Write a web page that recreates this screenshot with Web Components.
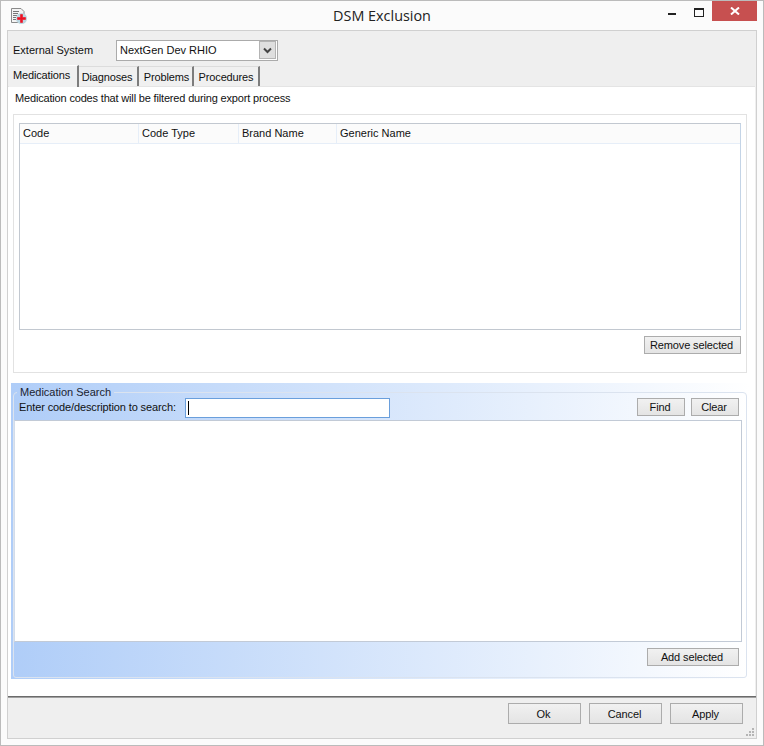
<!DOCTYPE html>
<html>
<head>
<meta charset="utf-8">
<title>DSM Exclusion</title>
<style>
    html,body{margin:0;padding:0;background:#fbfbfb;}
    body{font:11px "Liberation Sans",Arial,sans-serif;color:#111;}
</style>
</head>
<body>
<dialog-window>
    <system-bar slot="top"></system-bar>
    <tab-strip active="Medications" tabs="Diagnoses,Problems,Procedures" slot="tabs"></tab-strip>

    <export-filter></export-filter>
    <med-search></med-search>

    <ui-button slot="actions" w="73" h="21">Ok</ui-button>
    <ui-button slot="actions" w="73" h="21">Cancel</ui-button>
    <ui-button slot="actions" w="73" h="21">Apply</ui-button>
</dialog-window>

<script>
class UiButton extends HTMLElement {
    constructor(){
        super();
        this.attachShadow({mode:'open'});
    }
    connectedCallback(){
        const w = this.getAttribute('w') || 48;
        const h = this.getAttribute('h') || 18;
        this.shadowRoot.innerHTML = `
        <style>
        :host{
            display:flex;
            align-items:center;
            justify-content:center;
            box-sizing:border-box;
            width:${w}px;
            height:${h}px;
            flex:none;
            padding-right:2px;
            border:1px solid #acacac;
            background:linear-gradient(#f1f1f1,#e4e4e4);
            color:#111;
            letter-spacing:-.12px;
        }
        </style>
        <slot></slot>
        `;
    }
}

class TabStrip extends HTMLElement {
    constructor(){
        super();
        this.attachShadow({mode:'open'});
    }
    connectedCallback(){
        const others = this.getAttribute('tabs').split(',');
        const widths = {Diagnoses:60,Problems:55,Procedures:66};
        const nudge = {Diagnoses:'0 2px 0 0',Problems:'0 0 0 2px',Procedures:'0'};
        this.shadowRoot.innerHTML = `
        <style>
        :host{
            display:flex;
            align-items:flex-end;
            height:21px;
            padding-left:1px;
            position:relative;
            z-index:1;
            letter-spacing:-.15px;
        }
        .tab{
            box-sizing:border-box;
            height:20px;
            display:flex;
            align-items:center;
            justify-content:center;
            border-right:2px solid #7d7d7d;
            border-top:1px solid #dcdcdc;
            background:#f0f0f0;
            padding-top:1px;
        }
        .on{
            width:70px;
            height:22px;
            margin-bottom:-1px;
            padding:0 3px 4px 0;
            border-top:1px solid #fff;
            background:#f0f0f0;
        }
        </style>
        <div class="tab on">${this.getAttribute('active')}</div>
        ${others.map(t => `<div class="tab" style="width:${widths[t]}px;padding:1px ${nudge[t].split(' ')[1] || 0} 0 ${nudge[t].split(' ')[3] || 0}">${t}</div>`).join('')}
        `;
    }
}

class ListView extends HTMLElement {
    constructor(){
        super();
        this.attachShadow({mode:'open'});
    }
    connectedCallback(){
        this.shadowRoot.innerHTML = `
        <style>
        :host{
            display:block;
            box-sizing:border-box;
            height:207px;
            border:1px solid #c2c8d0;
            border-right-color:#c4d4e6;
            background:#fff;
        }
        .head{
            display:grid;
            grid-template-columns:119px 100px 98px 1fr;
            height:20px;
            background:#fbfbfb;
            border-bottom:1px solid #e6eef8;
            box-sizing:border-box;
        }
        .head div{
            padding-left:3px;
            line-height:19px;
            border-right:1px solid #e6eef8;
        }
        .head div:last-child{border-right:0;}
        </style>
        <div class="head">
            <div>Code</div>
            <div>Code Type</div>
            <div>Brand Name</div>
            <div>Generic Name</div>
        </div>
        `;
    }
}

class ExportFilter extends HTMLElement {
    constructor(){
        super();
        this.attachShadow({mode:'open'});
    }
    connectedCallback(){
        this.shadowRoot.innerHTML = `
        <style>
        :host{display:block;}
        p{
            margin:0;
            padding:4px 0 0 7px;
            height:23px;
            line-height:14px;
            letter-spacing:-.17px;
        }
        .box{
            box-sizing:border-box;
            margin:0 8px 0 5px;
            height:259px;
            border:1px solid #e2e2e2;
            padding:8px 5px 0 5px;
        }
        .foot{
            display:flex;
            justify-content:flex-end;
            margin-top:6px;
        }
        </style>
        <p>Medication codes that will be filtered during export process</p>
        <div class="box">
            <list-view></list-view>
            <div class="foot"><ui-button w="97" h="18">Remove selected</ui-button></div>
        </div>
        `;
    }
}

class MedSearch extends HTMLElement {
    constructor(){
        super();
        this.attachShadow({mode:'open'});
    }
    connectedCallback(){
        this.shadowRoot.innerHTML = `
        <style>
        :host{
            display:block;
            box-sizing:border-box;
            height:296px;
            margin:10px 5px 0 3px;
            padding:2px 3px 1px 2px;
            background:linear-gradient(90deg,#afcdf8 0%,#fff 100%);
        }
        fieldset{
            box-sizing:border-box;
            height:100%;
            margin:0;
            padding:0 6px 0 0;
            border:1px solid #dbe3ef;
            border-radius:4px 4px 3px 3px;
            min-width:0;
        }
        legend{
            margin-left:3px;
            padding:0 3px;
            line-height:14px;
            color:#1b2330;
        }
        .row{
            display:flex;
            align-items:flex-start;
            height:22px;
            margin-top:-1px;
            padding-left:5px;
        }
        label{line-height:19px;width:166px;flex:none;white-space:nowrap;letter-spacing:-.12px;}
        .input{
            box-sizing:border-box;
            width:205px;
            height:20px;
            border:1px solid #6a9fdc;
            background:#fff;
            display:flex;
            align-items:center;
            padding-left:2px;
        }
        .caret{width:1px;height:14px;background:#000;}
        .right{
            display:flex;
            gap:6px;
            margin-left:auto;
            margin-right:1px;
        }
        .results{
            box-sizing:border-box;
            height:222px;
            margin-right:-2px;
            border:1px solid #c2cad6;
            border-left-color:#d2dcea;
            background:#fff;
        }
        .foot{
            display:flex;
            justify-content:flex-end;
            margin:6px 1px 0 0;
        }
        </style>
        <fieldset>
            <legend>Medication Search</legend>
            <div class="row">
                <label>Enter code/description to search:</label>
                <div class="input"><div class="caret"></div></div>
                <div class="right">
                    <ui-button w="48" h="18">Find</ui-button>
                    <ui-button w="48" h="18">Clear</ui-button>
                </div>
            </div>
            <div class="results"></div>
            <div class="foot"><ui-button w="92" h="18">Add selected</ui-button></div>
        </fieldset>
        `;
    }
}

class SystemBar extends HTMLElement {
    constructor(){
        super();
        this.attachShadow({mode:'open'});
    }
    connectedCallback(){
        this.shadowRoot.innerHTML = `
        <style>
        :host{
            display:flex;
            align-items:center;
            height:34px;
            padding-left:5px;
            background:#efefef;
        }
        label{width:103px;flex:none;margin-top:4px;}
        .select{
            box-sizing:border-box;
            width:162px;
            height:21px;
            border:1px solid #ababab;
            background:#fff;
            display:flex;
            align-items:center;
            justify-content:space-between;
            padding:0 1px 0 3px;
            margin-top:4px;
        }
        .arrow{
            box-sizing:border-box;
            width:17px;
            height:18px;
            border:1px solid #b4b4b4;
            background:#dfdfdf;
            display:flex;
            align-items:center;
            justify-content:center;
        }
        </style>
        <label>External System</label>
        <div class="select">
            <span>NextGen Dev RHIO</span>
            <div class="arrow">
                <svg width="9" height="7" viewBox="0 0 9 7"><path d="M1 1.5 4.5 5 8 1.5" fill="none" stroke="#444" stroke-width="2"/></svg>
            </div>
        </div>
        `;
    }
}

class DialogWindow extends HTMLElement {
    constructor(){
        super();
        this.attachShadow({mode:'open'});
    }
    connectedCallback(){
        this.shadowRoot.innerHTML = `
        <style>
        :host{
            display:flex;
            flex-direction:column;
            box-sizing:border-box;
            width:764px;
            height:746px;
            border:1px solid #bbb;
            background:#fbfbfb;
            padding:0 6px 6px;
        }
        .title{
            display:grid;
            grid-template-columns:1fr auto 1fr;
            height:29px;
            margin:0 -6px;
        }
        .ico{padding:6px 0 0 9px;}
        h1{
            margin:0;
            font:14.4px "Open Sans",sans-serif;
            color:#222;
            line-height:30px;
        }
        .ctl{
            display:flex;
            justify-content:flex-end;
            align-items:flex-start;
            padding-right:6px;
        }
        .min{width:8px;height:2px;background:#222;margin:12px 18px 0 0;}
        .max{
            box-sizing:border-box;
            width:10px;
            height:9px;
            border:1px solid #222;
            border-top-width:2px;
            margin:7px 8px 0 0;
        }
        .close{
            width:45px;
            height:20px;
            background:#c75050;
            display:flex;
            align-items:center;
            justify-content:center;
        }
        .client{
            flex:1;
            display:flex;
            flex-direction:column;
            border:1px solid #d0d0d0;
            background:#efefef;
            min-height:0;
        }
        .page{
            box-sizing:border-box;
            height:610px;
            margin-right:1px;
            background:#fff;
            border-top:1px solid #e4e4e4;
        }
        .bar{
            flex:1;
            position:relative;
            display:flex;
            justify-content:flex-end;
            gap:8px;
            padding:6px 13px 0 0;
            border-top:1px solid #6b6b6b;
            box-shadow:inset 0 1px 0 #a0a0a0;
            background:#efefef;
        }
        .grip{position:absolute;right:1px;bottom:1px;}
        </style>
        <div class="title">
            <div class="ico">
                <svg width="18" height="18" viewBox="0 0 18 18">
                    <path d="M1.5 1.5H11L14 4.5V15.5H1.5Z" fill="#f4f4f4" stroke="#8a8a8a"/>
                    <path d="M3 4.5H9M3 6.5H8M3 8.5H7M3 10.5H6M3 12.5H6" stroke="#777"/>
                    <circle cx="11.5" cy="11.5" r="5.5" fill="#bcd6e0"/>
                    <path d="M10.5 7.5H12.5V10.5H15.5V12.5H12.5V15.5H10.5V12.5H7.5V10.5H10.5Z" fill="#ee1122" stroke="#ee1122" stroke-width=".6"/>
                </svg>
            </div>
            <h1>DSM Exclusion</h1>
            <div class="ctl">
                <div class="min"></div>
                <div class="max"></div>
                <div class="close">
                    <svg width="10" height="8" viewBox="0 0 10 8"><path d="M1 .5 9 7.5M9 .5 1 7.5" stroke="#fff" stroke-width="2"/></svg>
                </div>
            </div>
        </div>
        <div class="client">
            <slot name="top"></slot>
            <slot name="tabs"></slot>
            <div class="page"><slot></slot></div>
            <div class="bar">
                <slot name="actions"></slot>
                <svg class="grip" width="9" height="9" viewBox="0 0 9 9" fill="#b5b5b5">
                    <rect x="6" y="0" width="2" height="2"/>
                    <rect x="3" y="3" width="2" height="2"/><rect x="6" y="3" width="2" height="2"/>
                    <rect x="0" y="6" width="2" height="2"/><rect x="3" y="6" width="2" height="2"/><rect x="6" y="6" width="2" height="2"/>
                </svg>
            </div>
        </div>
        `;
    }
}

customElements.define('ui-button', UiButton);
customElements.define('tab-strip', TabStrip);
customElements.define('list-view', ListView);
customElements.define('export-filter', ExportFilter);
customElements.define('med-search', MedSearch);
customElements.define('system-bar', SystemBar);
customElements.define('dialog-window', DialogWindow);
</script>
</body>
</html>
